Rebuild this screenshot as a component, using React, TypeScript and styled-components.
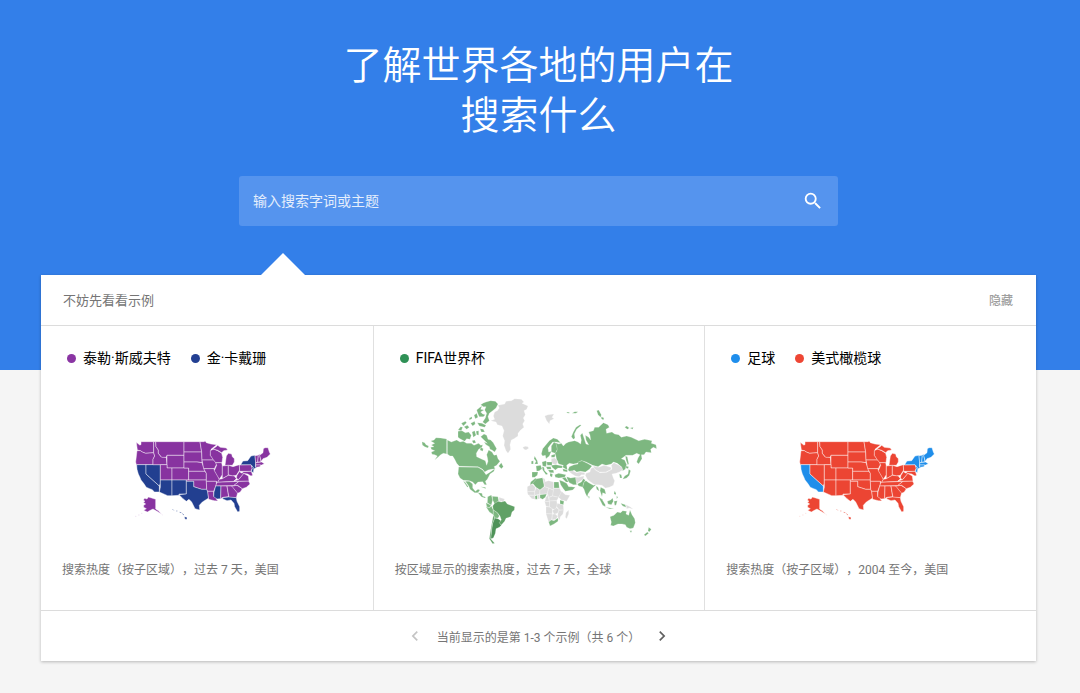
import React from "react";
import styled, { createGlobalStyle } from "styled-components";
import { MdSearch, MdChevronLeft, MdChevronRight } from "react-icons/md";

const GlobalStyle = createGlobalStyle`
  * { box-sizing: border-box; }
  body {
    margin: 0;
    background: #f5f5f5;
    color: #000;
    font-family: Roboto, "Noto Sans CJK SC", sans-serif;
    text-spacing-trim: space-all;
  }
`;

const Page = styled.main`
  padding-bottom: 32px;
`;

const Hero = styled.header`
  display: flex;
  flex-direction: column;
  align-items: center;
  gap: 35px;
  padding: 41px 44px 144px 41px;
  background: #337fe9;
`;

const Title = styled.h1`
  max-width: 400px;
  margin: 0;
  color: #fff;
  font-size: 39px;
  font-weight: 350;
  line-height: 50px;
  text-align: center;
`;

const SearchForm = styled.form`
  display: flex;
  align-items: center;
  width: 100%;
  max-width: 599px;
  height: 50px;
  padding: 0 14px;
  border-radius: 3px;
  background: #5594ee;
`;

const SearchInput = styled.input`
  flex: 1;
  min-width: 0;
  padding: 0;
  border: 0;
  outline: 0;
  background: none;
  color: #fff;
  font: inherit;
  font-size: 14px;
  line-height: 24px;

  &::placeholder {
    color: #e4eefc;
    opacity: 1;
  }
`;

const IconButton = styled.button<{ $color: string; $size: number }>`
  display: flex;
  padding: 0;
  border: 0;
  background: none;
  color: ${(p) => p.$color};
  font-size: ${(p) => p.$size}px;
  cursor: pointer;
`;

const Card = styled.section`
  position: relative;
  margin: -95px 44px 0 41px;
  background: #fff;
  box-shadow: 0 1px 3px rgba(0, 0, 0, 0.25);

  &::before {
    content: "";
    position: absolute;
    left: 220px;
    bottom: 100%;
    border: 22px solid transparent;
    border-top-width: 0;
    border-bottom-color: #fff;
  }
`;

const CardHeader = styled.div`
  display: flex;
  align-items: center;
  justify-content: space-between;
  height: 51px;
  padding: 0 23px 2px 22px;
  border-bottom: 1px solid #dcdcdc;
`;

const CardTitle = styled.h2`
  margin: 0;
  color: #757575;
  font-size: 13px;
  font-weight: 400;
`;

const HideButton = styled.button`
  padding: 0;
  border: 0;
  background: none;
  color: #9e9e9e;
  font: inherit;
  font-size: 12px;
  font-weight: 500;
  cursor: pointer;
`;

const Examples = styled.div`
  display: grid;
  grid-template-columns: repeat(3, 1fr);
`;

const Example = styled.article`
  display: flex;
  flex-direction: column;
  padding: 22px 21px 30px;

  & + & {
    border-left: 1px solid #e0e0e0;
  }
`;

const Legend = styled.ul`
  display: flex;
  gap: 20px;
  margin: 0;
  padding: 0 5px;
  list-style: none;
`;

const Term = styled.li<{ $color: string }>`
  display: flex;
  align-items: center;
  gap: 7px;
  font-size: 14px;
  line-height: 20px;

  &::before {
    content: "";
    width: 9px;
    height: 9px;
    border-radius: 50%;
    background: ${(p) => p.$color};
  }
`;

const MapArea = styled.div`
  display: flex;
  align-items: center;
  justify-content: center;
  height: 180px;
  margin-top: 12px;
`;

const Caption = styled.p`
  margin: 0;
  color: #757575;
  font-size: 12px;
  line-height: 20px;
`;

const Pager = styled.nav`
  display: flex;
  align-items: center;
  justify-content: center;
  gap: 12px;
  height: 51px;
  border-top: 1px solid #dcdcdc;
  color: #757575;
  font-size: 12px;
`;

const US_STATES: Record<string, string> = {
  WA: "32,37 42,45 46,44 46,35 84,35 84,68 60,70 50,66 44,62 35,60",
  OR: "34,62 44,62 50,66 60,70 84,68 87,78 82,88 82,104 32,104 30,96",
  CA: "33,104 61,104 61,132 101,168 101,186 86,186 80,179 72,176 62,172 54,160 46,150 42,140 38,132 34,118",
  NV: "61,104 104,104 104,160 101,168 61,132",
  ID: "84,35 90,35 91,50 98,60 98,70 106,80 122,82 124,104 82,104 82,88 87,78 84,68",
  MT: "90,35 175,35 175,76 124,76 122,82 108,82 98,70 98,60 91,50",
  WY: "124,76 175,76 175,114 124,114",
  UT: "104,104 124,104 124,114 139,114 139,150 104,150",
  CO: "139,114 189,114 189,150 139,150",
  AZ: "104,150 139,150 139,197 126,197 101,186 104,172",
  NM: "139,150 182,150 182,192 160,192 160,196 139,197",
  ND: "175,35 223,35 228,66 175,66",
  SD: "175,66 228,66 229,90 229,98 214,96 175,96",
  NE: "175,96 214,96 229,98 238,124 189,124 189,114 175,114",
  KS: "189,124 238,124 242,130 242,150 189,150",
  OK: "182,150 242,150 243,178 228,178 216,174 204,170 204,154 182,154",
  TX: "182,154 204,154 204,170 216,174 228,178 243,178 246,184 249,204 230,216 221,226 222,240 208,236 203,226 198,216 190,208 182,214 172,206 160,194 182,192",
  MN: "223,35 236,35 238,32 242,38 256,42 273,44 256,58 254,76 266,90 229,90 228,66",
  IA: "229,90 266,90 273,102 266,116 234,116",
  MO: "234,116 264,116 278,140 281,148 276,158 272,154 242,154 242,130",
  AR: "242,154 272,154 272,164 264,184 246,184 243,178",
  LA: "246,184 264,184 264,199 273,202 272,207 277,213 266,212 249,208",
  WI: "254,62 264,57 276,62 288,70 291,82 289,98 270,98 262,88 254,76",
  MU: "262,57 274,48 276,46 284,52 302,54 306,60 294,62 288,68 276,61",
  MI: "302,78 308,70 318,72 320,80 326,86 326,96 320,106 298,106 300,92",
  IL: "270,98 288,98 290,108 290,134 281,148 266,122 273,106",
  IN: "290,108 308,106 308,136 290,146",
  OH: "308,106 322,110 341,104 342,120 332,136 320,138 308,134",
  KY: "276,157 281,148 290,146 308,136 326,138 332,146 324,154",
  TN: "274,157 340,154 324,167 270,168",
  MS: "270,168 286,168 285,206 274,207 264,200 265,186",
  AL: "286,168 304,168 309,200 292,202 285,206",
  GA: "304,168 320,168 336,188 332,203 310,203",
  FL: "290,203 309,201 332,203 334,214 342,230 342,244 336,246 327,230 325,220 316,210 304,212 292,207",
  SC: "318,168 334,166 350,176 344,186 336,190",
  NC: "324,167 340,154 369,153 373,162 362,172 350,176 336,166",
  VA: "324,154 340,148 354,130 368,138 370,153",
  WV: "332,144 334,136 342,124 346,129 356,128 346,140 338,149",
  PA: "341,105 376,104 380,114 376,124 342,124",
  MD: "350,125 377,124 381,136 376,138 366,132 352,130",
  NJ: "378,108 385,112 383,128 377,124 380,116",
  NY: "345,104 352,93 366,92 376,78 388,76 390,98 389,110 398,109 386,116 376,104",
  VT: "388,77 398,76 396,97 390,98",
  NH: "398,76 402,72 406,95 396,97",
  ME: "402,76 412,68 413,56 418,53 427,53 431,66 434,72 424,82 412,86 407,94",
  MA: "390,98 408,96 416,101 408,105 390,105",
  CT: "390,105 405,105 403,110 390,112",
  AK: "53,210 57,205 64,207 68,201 78,204 90,208 90,237 98,242 107,252 94,244 82,237 74,241 65,246 54,241 62,236 54,232 54,226 60,222 53,217 58,214",
  HI: "176,260 184,262 184,268 178,268",
};

const US_ISLANDS = "M141 238l3 3M152 243h3M162 247l5 1M170 251l5 4";

interface UsMapProps {
  label: string;
  base: string;
  accent: string;
  accented: string[];
}

function UsMap({ label, base, accent, accented }: UsMapProps) {
  return (
    <svg width="160" height="120" viewBox="4 -60 480 360" role="img" aria-label={label}>
      <g stroke="#fff" strokeOpacity="0.65" strokeWidth="2" strokeLinejoin="round">
        {Object.entries(US_STATES).map(([code, points]) => (
          <polygon key={code} points={points} fill={accented.includes(code) ? accent : base} />
        ))}
      </g>
      <path d={US_ISLANDS} stroke={accented.includes("HI") ? accent : base} strokeOpacity="0.5" strokeWidth="3" fill="none" />
      <path d="M50 250h-4M42 255h-5M32 259h-4M108 253l3 2" stroke={base} strokeOpacity="0.2" strokeWidth="2" fill="none" />
    </svg>
  );
}

const GREEN = "#7db780";
const MID_GREEN = "#60a165";
const DEEP_GREEN = "#4e9258";
const GRAY = "#dcdcdc";

const AMERICAS: [string, string][] = [
  [GREEN, "98,147 98,192 88,190 80,194 72,202 62,210 70,198 62,194 54,193 52,186 62,182 52,178 50,172 60,170 52,165 62,160 50,153 60,150 66,143 80,144"],
  [GREEN, "24,155 32,158 36,164 44,168 42,174 32,170 25,165"],
  [GREEN, "100,150 112,156 128,150 138,156 148,154 158,160 172,160 180,166 194,160 200,166 206,164 204,172 194,178 187,190 188,200 204,208 214,212 218,226 222,214 220,202 218,194 224,180 234,186 240,196 248,194 252,206 258,214 248,226 240,230 244,236 232,238 222,240 212,246 206,238 192,230 136,229 128,220 122,208 116,198 108,198 100,192"],
  [GREEN, "262,218 268,230 262,236 254,228"],
  [GREEN, "200,140 210,132 218,136 222,148 230,150 238,158 242,166 248,176 242,186 234,180 228,178 226,170 216,164 210,156 220,160 210,150"],
  [GREEN, "132,124 144,122 154,128 164,126 172,136 168,148 158,146 152,154 138,146 132,142"],
  [GREEN, "132,120 140,110 146,112 142,122"],
  [GREEN, "142,100 154,94 158,98 148,108"],
  [GREEN, "150,110 160,106 166,112 158,118"],
  [GREEN, "170,100 182,94 184,102 176,108"],
  [GREEN, "174,126 182,122 186,136 178,142"],
  [GREEN, "186,124 194,122 194,136 188,134"],
  [GREEN, "190,98 204,100 216,106 212,112 196,108"],
  [GREEN, "198,116 208,118 212,126 202,126"],
  [GREEN, "174,152 182,150 186,158 178,160"],
  [GREEN, "200,172 208,176 206,184 198,180"],
  [GREEN, "166,84 174,80 174,86 166,90"],
  [GREEN, "180,76 188,70 192,82 184,86"],
  [GREEN, "188,60 198,52 204,48 200,58 210,60 200,66 206,72 214,74 208,80 196,80 192,72"],
  [GREEN, "200,44 208,39 216,36 230,32 244,34 252,42 246,54 236,62 226,70 222,80 226,92 214,102 206,96 214,84 218,70 212,60 216,50 208,50"],
  [GREEN, "134,231 192,232 206,240 212,248 216,254 232,244 242,236 240,244 228,252 224,260 220,268 214,274 218,284 212,284 206,275 192,276 184,284 176,276 166,272 148,271 138,264 132,252"],
  [GREEN, "154,274 166,274 176,282 176,294 184,304 192,298 198,300 192,308 182,308 168,298 164,288"],
  [GREEN, "148,274 153,276 163,290 160,292"],
  [GREEN, "192,308 204,310 206,318 216,322 212,324 202,320"],
  [GREEN, "200,290 214,292 216,296 204,292"],
  [GREEN, "221,320 232,315 236,330 232,346 220,338"],
  [GREEN, "235,319 252,320 254,332 242,342 236,330"],
  [GRAY, "255,322 272,327 268,335 256,333"],
  [GREEN, "216,338 231,346 226,354 218,350"],
  [GREEN, "216,350 226,354 232,348 238,360 238,374 226,366"],
  [MID_GREEN, "236,348 242,340 252,334 262,336 273,333 280,342 302,350 301,360 294,366 290,380 276,385 272,394 262,405 254,398 262,390 258,378 250,368 238,360"],
  [GREEN, "238,360 250,368 256,378 252,384 242,384 238,374"],
  [DEEP_GREEN, "242,384 252,386 260,392 256,398 262,406 256,412 246,416 244,430 238,444 230,446 233,420 236,400"],
  [MID_GREEN, "238,376 242,384 235,402 232,422 230,446 242,460 236,461 226,446 230,420 234,398"],
  [GRAY, "230,92 242,88 238,78 242,66 250,62 256,54 252,46 272,42 276,34 292,32 302,26 322,28 330,36 324,40 342,48 338,58 330,62 334,74 328,84 332,92 326,102 330,112 320,120 312,130 312,138 300,146 292,150 288,164 290,178 282,190 276,182 270,166 272,152 266,138 270,122 264,108 250,104 246,96"],
  [GRAY, "326,172 334,169 342,170 344,175 336,180 330,178"],
];

const EURASIA_AFRICA: [string, string][] = [
  [GREEN, "98,172 94,158 104,162 112,160 118,168 126,160 134,156 152,152 162,156 170,162 172,150 169,136 175,129 180,144 186,162 194,164 186,150 184,136 194,142 200,150 198,136 194,126 208,122 212,112 224,112 238,98 252,104 256,112 246,118 248,130 264,126 272,132 284,134 292,142 308,138 322,142 344,152 362,148 384,152 382,160 396,164 398,176 388,172 380,178 382,188 366,186 360,194 352,194 354,206 344,222 338,216 342,204 348,194 338,190 326,196 306,196 292,206 302,210 308,224 304,238 296,242 292,230 280,220 268,216 262,222 246,226 234,222 222,230 206,226 186,216 172,212 160,220 148,222 136,220 128,226 130,240 116,232 118,226 104,222 98,210 96,200 92,188 98,184"],
  [GREEN, "148,148 142,140 148,126 156,112 168,104 172,106 158,118 151,132 153,144"],
  [GREEN, "218,62 224,60 232,74 230,82 222,74"],
  [GREEN, "232,80 240,84 238,90 232,86"],
  [GREEN, "302,112 308,108 316,114 310,118"],
  [GREEN, "318,114 328,112 326,118"],
  [GREEN, "304,198 310,200 314,220 312,226 306,210"],
  [GREEN, "128,66 136,67 136,70 129,69"],
  [GREEN, "144,70 152,65 162,65 156,70"],
  [GRAY, "62,78 72,74 90,72 84,82 90,86 78,92 76,102 68,92"],
  [GREEN, "52,192 56,176 66,164 76,152 88,144 100,148 110,158 96,156 86,156 78,166 72,174 74,186 82,184 76,198 66,206 64,196 56,198"],
  [GREEN, "82,168 90,156 96,160 100,178 94,190 82,186"],
  [GREEN, "82,196 94,192 92,202 82,202"],
  [GRAY, "82,206 92,204 102,214 96,224 82,220"],
  [GREEN, "54,216 66,212 68,218 66,230 56,228"],
  [GREEN, "68,216 84,216 84,226 70,226"],
  [GREEN, "82,226 96,224 116,228 114,234 102,234 94,240 84,232"],
  [GREEN, "36,228 50,226 54,236 46,242 38,244"],
  [GREEN, "32,198 40,212 42,222 32,222 36,214 30,206"],
  [GREEN, "22,214 28,212 28,222 22,222"],
  [GREEN, "24,246 42,246 40,256 32,262 24,262"],
  [GREEN, "54,230 60,232 62,242 72,252 66,254 56,240"],
  [GREEN, "66,230 80,230 82,238 70,238"],
  [GREEN, "72,240 88,240 90,248 78,248"],
  [GREEN, "78,250 86,252 84,262 78,258"],
  [GREEN, "132,240 136,230 150,224 162,222 162,216 174,212 190,220 204,228 196,238 184,246 170,244 158,246 150,240 146,244 136,244"],
  [GREEN, "116,236 130,240 130,246 118,244"],
  [GRAY, "208,228 224,232 240,226 260,232 262,238 246,246 226,246 212,238"],
  [GRAY, "184,256 186,250 198,246 200,236 208,232 214,240 228,248 248,247 264,238 262,226 270,218 282,224 294,232 296,240 286,246 276,250 264,252 268,264 272,272 268,286 256,292 244,294 234,286 222,284 212,284 200,276 190,268"],
  [GRAY, "134,244 146,242 158,248 168,246 182,248 182,254 172,254 166,260 154,258 144,252"],
  [GRAY, "150,262 164,262 180,258 178,268 168,274 160,280 154,274"],
  [GREEN, "92,254 104,250 126,254 122,262 104,264 94,262"],
  [GREEN, "128,260 140,264 154,262 158,284 148,284 136,278 130,268"],
  [GREEN, "114,264 124,262 134,276 126,276"],
  [GREEN, "106,270 116,274 128,280 134,290 142,290 154,292 146,300 124,304 118,296 110,284"],
  [GREEN, "160,282 172,276 178,266 184,270 178,282 178,292 164,288"],
  [GREEN, "180,276 186,272 194,278 208,286 216,284 208,292 200,300 192,312 190,322 184,310 180,298 176,292"],
  [GREEN, "192,318 197,320 195,326"],
  [GREEN, "286,252 292,254 294,264 288,264"],
  [GREEN, "302,258 312,252 314,238 320,242 316,256 308,264 296,268"],
  [GREEN, "306,228 314,230 312,236 306,234"],
  [GREEN, "216,288 222,292 226,304 218,298"],
  [GREEN, "230,292 242,298 246,312 236,308 234,320 228,302"],
  [GREEN, "224,320 234,328 244,344 244,350 236,346 228,330"],
  [GREEN, "244,352 260,354 270,354 258,357"],
  [GREEN, "250,334 260,330 266,324 268,334 262,344 252,342"],
  [GREEN, "270,334 280,332 276,346 272,346"],
  [GREEN, "272,302 276,310 274,316 270,310"],
  [GREEN, "278,318 282,322 278,326"],
  [GREEN, "290,340 304,344 306,352 296,348"],
  [GRAY, "306,344 318,350 328,358 316,354 308,356"],
  [GREEN, "258,380 270,376 280,366 290,368 296,362 308,364 306,372 314,376 318,360 324,374 332,386 334,398 328,414 318,416 308,412 304,404 294,402 282,402 268,408 260,406 262,396"],
  [GREEN, "317,422 324,422 321,428"],
  [GREEN, "374,412 382,418 376,426 372,422"],
  [GREEN, "370,426 374,430 364,438 360,434"],
  [GREEN, "20,276 34,265 40,268 32,278 18,286"],
  [GREEN, "26,280 38,266 56,263 60,284 60,290 48,300 36,292"],
  [GRAY, "56,264 62,266 64,274 60,278"],
  [GRAY, "60,276 74,272 89,276 89,301 74,294 61,290"],
  [GREEN, "90,276 104,276 106,294 90,294"],
  [GRAY, "10,290 24,282 34,292 32,305 10,305"],
  [GRAY, "10,305 32,305 32,316 12,315"],
  [GRAY, "32,305 36,293 48,301 47,313 32,316"],
  [GRAY, "48,301 61,290 74,294 70,312 47,313"],
  [GRAY, "74,294 89,301 86,318 74,322 70,312"],
  [GRAY, "89,295 107,295 113,308 104,322 86,318"],
  [GRAY, "113,304 124,314 138,316 128,334 112,330 104,322"],
  [GRAY, "14,316 32,316 33,328 24,326"],
  [GREEN, "33,318 40,316 40,328 34,328"],
  [GRAY, "41,314 47,313 47,326 41,327"],
  [GREEN, "48,314 68,312 64,322 56,328 48,324"],
  [GRAY, "66,322 72,314 76,334 62,335"],
  [GRAY, "75,322 86,318 104,322 98,332 76,333"],
  [GRAY, "62,335 77,334 76,351 66,349"],
  [GRAY, "77,333 98,332 100,346 94,360 84,356 76,351"],
  [GREEN, "108,330 120,334 118,344 108,342"],
  [GRAY, "100,340 108,342 118,346 119,360 106,360 98,350"],
  [GRAY, "66,350 76,351 85,356 85,372 66,371"],
  [GRAY, "85,362 98,353 105,359 101,370 90,373"],
  [GRAY, "104,361 119,360 117,372 109,380 108,386 104,392 101,376"],
  [GRAY, "66,371 85,372 83,390 74,397"],
  [GRAY, "85,373 94,372 101,379 97,387 84,390"],
  [GREEN, "74,396 82,390 90,392 102,384 102,394 90,402 78,408"],
  [GRAY, "126,368 134,360 134,372 128,386 124,382"],
];

function WorldMap() {
  return (
    <svg width="250" height="160" viewBox="0 0 750 480" role="img" aria-label="FIFA世界杯 全球热度地图">
      <g stroke="#fff" strokeWidth="1" strokeOpacity="0.7" strokeLinejoin="round">
        {AMERICAS.map(([fill, points]) => (
          <polygon key={points} points={points} fill={fill} />
        ))}
        <g transform="translate(330 0)">
          {EURASIA_AFRICA.map(([fill, points]) => (
            <polygon key={points} points={points} fill={fill} />
          ))}
        </g>
      </g>
    </svg>
  );
}

export default function App() {
  return (
    <>
      <GlobalStyle />
      <Page>
        <Hero>
          <Title>了解世界各地的用户在搜索什么</Title>
          <SearchForm role="search" onSubmit={(e: React.FormEvent) => e.preventDefault()}>
            <SearchInput type="text" placeholder="输入搜索字词或主题" aria-label="输入搜索字词或主题" />
            <IconButton type="submit" aria-label="搜索" $color="#fff" $size={22}>
              <MdSearch />
            </IconButton>
          </SearchForm>
        </Hero>
        <Card>
          <CardHeader>
            <CardTitle>不妨先看看示例</CardTitle>
            <HideButton type="button">隐藏</HideButton>
          </CardHeader>
          <Examples>
            <Example>
              <Legend>
                <Term $color="#8a35a3">泰勒·斯威夫特</Term>
                <Term $color="#233f92">金·卡戴珊</Term>
              </Legend>
              <MapArea>
                <UsMap
                  label="泰勒·斯威夫特与金·卡戴珊 美国热度地图"
                  base="#8833a0"
                  accent="#223f90"
                  accented={["CA", "NV", "AZ", "NM", "TX", "MS", "FL", "NY", "NJ", "HI"]}
                />
              </MapArea>
              <Caption>搜索热度（按子区域），过去 7 天，美国</Caption>
            </Example>
            <Example>
              <Legend>
                <Term $color="#2f9156">FIFA世界杯</Term>
              </Legend>
              <MapArea>
                <WorldMap />
              </MapArea>
              <Caption>按区域显示的搜索热度，过去 7 天，全球</Caption>
            </Example>
            <Example>
              <Legend>
                <Term $color="#1f8eec">足球</Term>
                <Term $color="#ee4634">美式橄榄球</Term>
              </Legend>
              <MapArea>
                <UsMap
                  label="足球与美式橄榄球 美国热度地图"
                  base="#ec4533"
                  accent="#1f8eea"
                  accented={["CA", "NY", "NJ", "VT", "NH", "ME", "MA", "CT"]}
                />
              </MapArea>
              <Caption>搜索热度（按子区域），2004 至今，美国</Caption>
            </Example>
          </Examples>
          <Pager aria-label="示例分页">
            <IconButton type="button" aria-label="上一页" $color="#c4c4c4" $size={20} disabled>
              <MdChevronLeft />
            </IconButton>
            <span>当前显示的是第 1-3 个示例（共 6 个）</span>
            <IconButton type="button" aria-label="下一页" $color="#616161" $size={20}>
              <MdChevronRight />
            </IconButton>
          </Pager>
        </Card>
      </Page>
    </>
  );
}
